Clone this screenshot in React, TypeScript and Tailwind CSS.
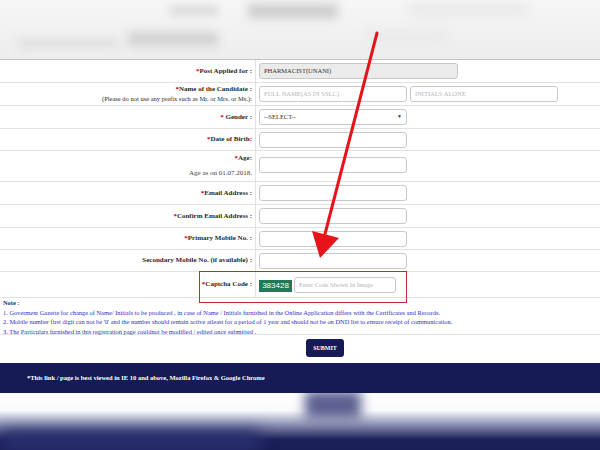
import React from "react";

const Star = () => <span className="text-[#d0021b]">*</span>;

const Row = ({
  label,
  children,
  h = "h-[23px]",
}: {
  label: React.ReactNode;
  children?: React.ReactNode;
  h?: string;
}) => (
  <div className={`flex ${h} border-b border-[#e2e2e2] bg-white`}>
    <div className="w-[256px] shrink-0 border-r border-[#e2e2e2] pr-[3px] flex flex-col items-end justify-center text-right text-[7px] font-bold text-[#2a2a2a] leading-[9px]">
      {label}
    </div>
    <div className="flex items-center pl-[3px] gap-[3px]">{children}</div>
  </div>
);

const Field = ({
  w = "w-[148px]",
  ph,
  value,
  grey,
}: {
  w?: string;
  ph?: string;
  value?: string;
  grey?: boolean;
}) => (
  <div
    className={`${w} h-[16px] rounded-[3px] border border-[#c9c9c9] flex items-center px-[4px] text-[6.5px] ${
      grey ? "bg-[#ebebeb] text-[#333]" : "bg-white text-[#b5b5b5]"
    }`}
  >
    {value ?? ph}
  </div>
);

const App = () => {
  return (
    <div className="relative w-[600px] h-[450px] overflow-hidden bg-white font-['Liberation_Serif',serif]">
      {/* blurred header */}
      <div className="h-[60px] border-b border-[#c4c4c4] bg-gradient-to-b from-[#f6f6f6] to-[#ededed] overflow-hidden">
        <div className="flex pt-[4px] gap-[30px] pl-[170px]">
          <div className="w-[48px] h-[9px] bg-[#d8d8d8] blur-[4px] mt-[2px]" />
          <div className="w-[90px] h-[14px] bg-[#cdcdcd] blur-[5px]" />
          <div className="w-[120px] h-[12px] bg-[#e9e9e9] blur-[6px] ml-[40px]" />
        </div>
        <div className="flex pt-[14px] gap-[10px] pl-[18px]">
          <div className="w-[100px] h-[10px] bg-[#e0e0e0] blur-[5px] mt-[6px]" />
          <div className="w-[90px] h-[14px] bg-[#d2d2d2] blur-[5px]" />
          <div className="w-[80px] h-[10px] bg-[#e8e8e8] blur-[6px] ml-[140px]" />
        </div>
      </div>

      <Row label={<span><Star />Post Applied for :</span>}>
        <Field w="w-[199px]" value="PHARMACIST(UNANI)" grey />
      </Row>
      <Row
        label={
          <>
            <span><Star />Name of the Candidate :</span>
            <span className="font-normal text-[6.5px]">
              (Please do not use any prefix such as Mr. or Mrs. or Ms.):
            </span>
          </>
        }
      >
        <Field ph="FULL NAME(AS IN SSLC)" />
        <Field ph="INITIALS ALONE" />
      </Row>
      <Row label={<span><Star /> Gender :</span>}>
        <div className="w-[148px] h-[16px] rounded-[3px] border border-[#c9c9c9] bg-white flex items-center justify-between px-[4px] text-[6.5px] text-[#333]">
          <span>--SELECT--</span>
          <span className="text-[5px]">▼</span>
        </div>
      </Row>
      <Row h="h-[22px]" label={<span><Star />Date of Birth:</span>}>
        <Field />
      </Row>
      <Row
        h="h-[31px]"
        label={
          <div className="flex flex-col items-end justify-between h-full py-[3px]">
            <span><Star />Age:</span>
            <span className="font-normal text-[#444]">Age as on 01.07.2018.</span>
          </div>
        }
      >
        <div className="pt-[6px] self-start">
          <Field />
        </div>
      </Row>
      <Row label={<span><Star />Email Address :</span>}>
        <Field />
      </Row>
      <Row label={<span><Star />Confirm Email Address :</span>}>
        <Field />
      </Row>
      <Row h="h-[22px]" label={<span><Star />Primary Mobile No. :</span>}>
        <Field />
      </Row>
      <Row h="h-[22px]" label={<span>Secondary Mobile No. (if available) :</span>}>
        <Field />
      </Row>
      <Row h="h-[26px]" label={<span><Star />Captcha Code :</span>}>
        <div className="flex items-center gap-[2px]">
          <div className="h-[12px] w-[33px] bg-[#1e7a56] text-white text-[8px] font-['Liberation_Sans',sans-serif] flex items-center justify-center mt-[2px]">
            383428
          </div>
          <Field w="w-[102px]" ph="Enter Code Shown In Image" />
        </div>
      </Row>

      {/* note */}
      <div className="h-[37px] border-b border-[#e2e2e2] pl-[3px] text-[6.4px] leading-[9.6px] text-[#2f30c8]">
        <div className="font-bold text-[#1c1c80]">Note :</div>
        <div>
          1. Goverment Gazette for change of Name/ Initials to be produced , in case of Name / Initials furnished in the Online Application differs with the Certificates and Records.
        </div>
        <div>
          2. Mobile number first digit can not be '0' and the number should remain active atleast for a period of 1 year and should not be on DND list to ensure receipt of communication.
        </div>
        <div>
          3. The Particulars furnished in this registration page couldnot be modified / edited once submitted .
        </div>
      </div>

      {/* submit */}
      <div className="h-[28px] flex items-start justify-center pt-[4px] pl-[50px]">
        <div className="w-[38px] h-[18px] rounded-[3px] bg-[#161a55] text-white text-[6px] font-bold flex items-center justify-center">
          SUBMIT
        </div>
      </div>

      {/* footer */}
      <div className="h-[30px] bg-[#161a55] flex items-center pl-[27px] text-white text-[6.5px] font-bold">
        *This link / page is best viewed in IE 10 and above, Mozilla Firefox &amp; Google Chrome
      </div>

      {/* blurred bottom */}
      <div className="h-[58px] bg-[linear-gradient(to_bottom,#ffffff_0%,#fafafc_30%,#8a8fb2_55%,#1c2059_80%,#1a1d56_100%)] overflow-hidden">
        <div className="flex h-full">
          <div className="w-[260px] flex flex-col justify-end">
            <div className="h-[20px] bg-[#2a3170] blur-[8px]" />
          </div>
          <div className="w-[56px] h-[28px] bg-[#5b6090] blur-[6px] ml-[45px] -mt-[2px]" />
        </div>
      </div>

      {/* annotation: captcha box */}
      <div className="absolute left-[199px] top-[271px] w-[208px] h-[32px] border border-[#c22a30]" />

      {/* annotation: arrow */}
      <svg className="absolute left-0 top-0" width="600" height="450" viewBox="0 0 600 450">
        <line x1="377" y1="33" x2="325" y2="234" stroke="#e8121a" strokeWidth="3" strokeLinecap="round" />
        <polygon points="312,231 339,238 320,258" fill="#e8121a" />
      </svg>
    </div>
  );
};

export default App;
